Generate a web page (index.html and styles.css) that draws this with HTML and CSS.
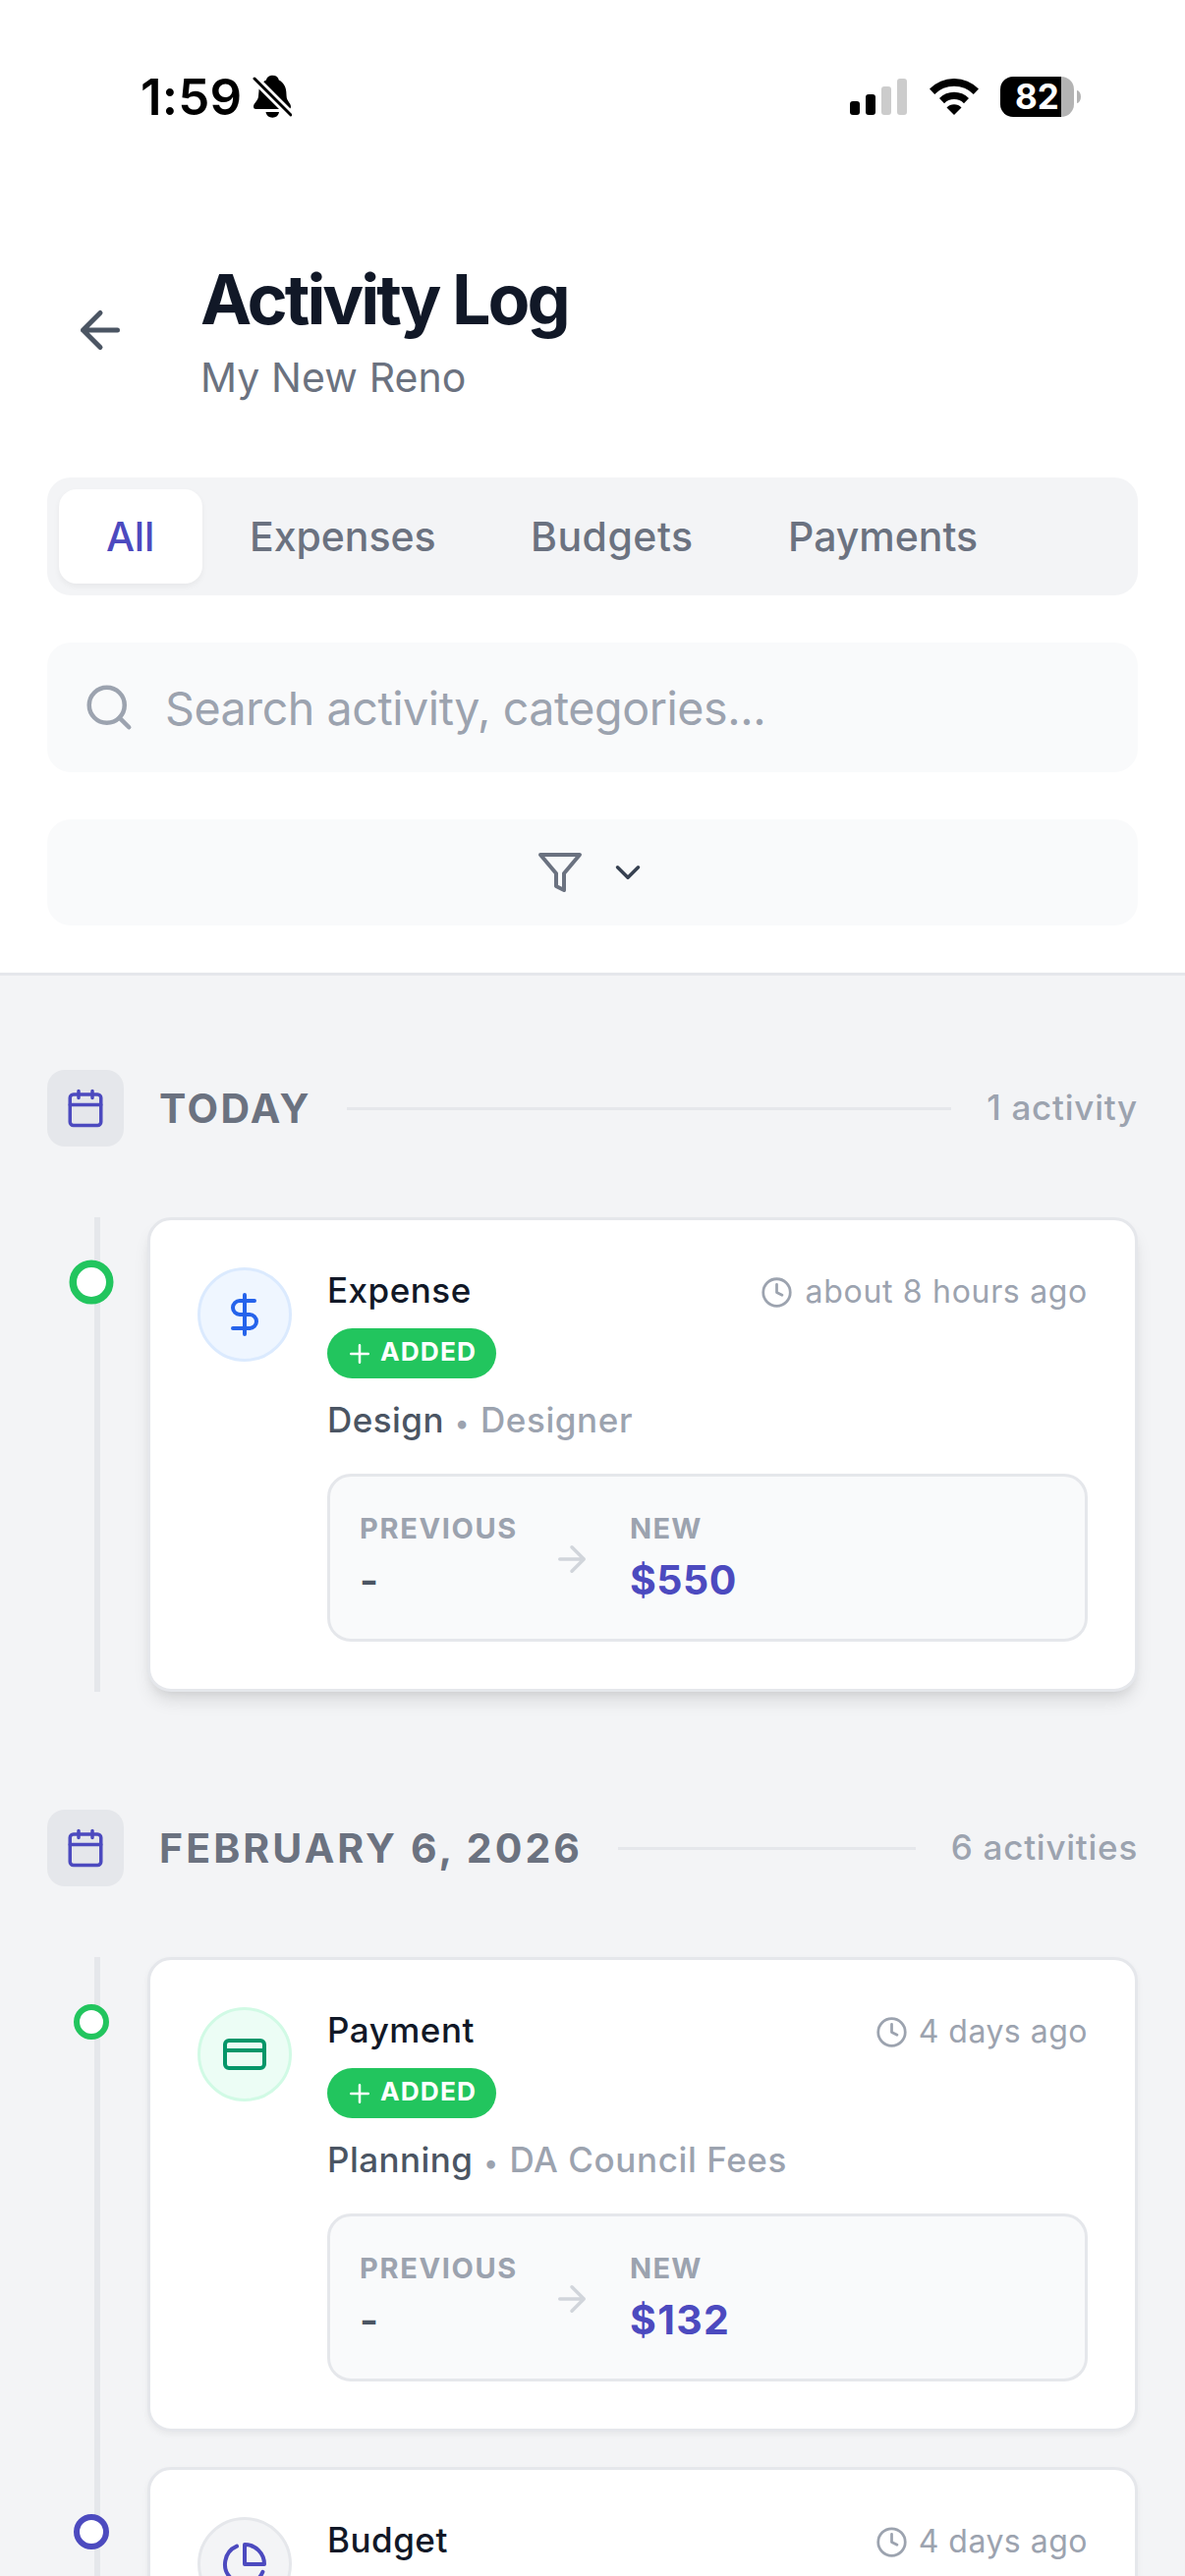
FILE: index.html
```
<!DOCTYPE html>
<html lang="en">
<head>
<meta charset="utf-8">
<title>Activity Log</title>
<link rel="stylesheet" href="styles.css">
</head>
<body>
<svg class="sprite" aria-hidden="true">
  <symbol id="i-calendar" viewBox="0 0 24 24"><path d="M8 2v4M16 2v4M3 10h18"/><rect x="3" y="4" width="18" height="18" rx="2"/></symbol>
  <symbol id="i-clock" viewBox="0 0 24 24"><circle cx="12" cy="12" r="10"/><path d="M12 6v6l4 2"/></symbol>
  <symbol id="i-plus" viewBox="0 0 24 24"><path d="M5 12h14M12 5v14"/></symbol>
  <symbol id="i-right" viewBox="0 0 24 24"><path d="M5 12h14M12 5l7 7-7 7"/></symbol>
</svg>

<div class="screen">
  <div class="status">
    <div class="status-left">
      <span class="clock">1:59</span>
      <svg class="bell" width="40" height="44" viewBox="0 0 40 44">
        <path d="M20.5 .8C17 .8 14.500 2.800 14 5.500 9.500 7.500 6.600 12 6.400 17.500L6 22C5.600 27 1 29 1 32.500Q1 35 3.500 35H36.500Q39 35 39 32.500C39 29 34.800 27 34.600 22L34.300 17.500C34 12 31 7.500 26.800 5.500 26.300 2.800 24 .8 20.500 .8Z"/>
        <path d="M13.500 38H27C26.500 41.500 24 43.700 20.300 43.700S14 41.500 13.500 38Z"/>
        <path class="bell-gap" d="M0 2L40 42"/>
        <path class="bell-slash" d="M2 4L39 41"/>
      </svg>
    </div>
    <div class="status-right">
      <div class="signal"><i class="b1"></i><i class="b2"></i><i class="b3"></i><i class="b4"></i></div>
      <svg width="50" height="37" viewBox="0 0 50 37">
        <path d="M0 10.500A35 35 0 0 1 50 10.500L44.800 16A27.800 27.800 0 0 0 5.200 16Z"/>
        <path d="M10 20A21 21 0 0 1 40 20L35 25.300A14 14 0 0 0 15 25.300Z"/>
        <path d="M17.500 29.500A10.500 10.500 0 0 1 32.500 29.500L25 37Z"/>
      </svg>
      <div class="battery"><div class="cell">82</div><i class="nub"></i></div>
    </div>
  </div>

  <header class="header">
    <div class="heading">
      <button class="back" aria-label="Back"><svg class="ic" width="60" height="60" viewBox="0 0 24 24"><path d="M12 19l-7-7 7-7M19 12H5"/></svg></button>
      <div>
        <h1>Activity Log</h1>
        <p class="project">My New Reno</p>
      </div>
    </div>
    <nav class="tabs">
      <a class="tab tab-all active">All</a>
      <a class="tab tab-expenses">Expenses</a>
      <a class="tab tab-budgets">Budgets</a>
      <a class="tab tab-payments">Payments</a>
    </nav>
    <div class="search">
      <svg class="ic" width="54" height="54" viewBox="0 0 24 24"><circle cx="11" cy="11" r="8"/><path d="M21 21l-4.300-4.300"/></svg>
      <span>Search activity, categories...</span>
    </div>
    <div class="filter">
      <svg class="ic funnel" width="48" height="48" viewBox="0 0 24 24"><path d="M22 3H2l8 9.460V19l4 2v-8.540L22 3z"/></svg>
      <svg class="ic chevron" width="42" height="42" viewBox="0 0 24 24"><path d="M6 9l6 6 6-6"/></svg>
    </div>
  </header>

  <main class="feed">
    <section class="group">
      <div class="day">
        <span class="day-icon"><svg class="ic" width="42" height="42"><use href="#i-calendar"/></svg></span>
        <h2 class="today">TODAY</h2>
        <i class="rule"></i>
        <span class="count">1 activity</span>
      </div>
      <div class="timeline">
        <article class="card latest">
          <i class="dot added"></i>
          <div class="avatar expense"><svg class="ic" width="48" height="48" viewBox="0 0 24 24"><path d="M12 2v20M17 5H9.500a3.500 3.500 0 0 0 0 7h5a3.500 3.500 0 0 1 0 7H6"/></svg></div>
          <div class="body">
            <div class="top"><h3>Expense</h3><span class="time hours"><svg class="ic" width="33" height="33"><use href="#i-clock"/></svg><span>about 8 hours ago</span></span></div>
            <div class="badge"><svg class="ic" width="30" height="30"><use href="#i-plus"/></svg><span>ADDED</span></div>
            <div class="item"><b>Design</b><i>•</i><span>Designer</span></div>
            <div class="change">
              <div class="from"><small>PREVIOUS</small><strong>-</strong></div>
              <svg class="ic arrow" width="42" height="42"><use href="#i-right"/></svg>
              <div class="to"><small>NEW</small><strong>$550</strong></div>
            </div>
          </div>
        </article>
      </div>
    </section>

    <section class="group">
      <div class="day">
        <span class="day-icon"><svg class="ic" width="42" height="42"><use href="#i-calendar"/></svg></span>
        <h2>FEBRUARY 6, 2026</h2>
        <i class="rule"></i>
        <span class="count">6 activities</span>
      </div>
      <div class="timeline">
        <article class="card">
          <i class="dot added"></i>
          <div class="avatar payment"><svg class="ic" width="48" height="48" viewBox="0 0 24 24"><rect x="2" y="5" width="20" height="14" rx="2"/><path d="M2 10h20"/></svg></div>
          <div class="body">
            <div class="top"><h3>Payment</h3><span class="time"><svg class="ic" width="33" height="33"><use href="#i-clock"/></svg><span>4 days ago</span></span></div>
            <div class="badge"><svg class="ic" width="30" height="30"><use href="#i-plus"/></svg><span>ADDED</span></div>
            <div class="item"><b>Planning</b><i>•</i><span>DA Council Fees</span></div>
            <div class="change">
              <div class="from"><small>PREVIOUS</small><strong>-</strong></div>
              <svg class="ic arrow" width="42" height="42"><use href="#i-right"/></svg>
              <div class="to"><small>NEW</small><strong class="wide">$132</strong></div>
            </div>
          </div>
        </article>
        <article class="card">
          <i class="dot changed"></i>
          <div class="avatar budget"><svg class="ic" width="48" height="48" viewBox="0 0 24 24"><path d="M21.210 15.890A10 10 0 1 1 8 2.830"/><path d="M22 12A10 10 0 0 0 12 2v10z"/></svg></div>
          <div class="body">
            <div class="top"><h3>Budget</h3><span class="time"><svg class="ic" width="33" height="33"><use href="#i-clock"/></svg><span>4 days ago</span></span></div>
          </div>
        </article>
      </div>
    </section>
  </main>
</div>
</body>
</html>
```
FILE: styles.css
```
:root {
  --indigo: #4c4abf;
  --gray-50: #f9fafb;
  --gray-100: #f3f4f6;
  --gray-200: #e5e7eb;
  --gray-300: #d1d5db;
  --gray-400: #9ca3af;
  --gray-500: #6b7280;
  --gray-600: #4b5563;
  --ink: #111827;
  --green: #22c55e;
}
* { box-sizing: border-box; margin: 0; padding: 0; }
body {
  background: #fff;
  color: var(--ink);
  font-family: Inter, "Liberation Sans", sans-serif;
  font-weight: 400;
  white-space: nowrap;
}
i { font-style: normal; }
svg { display: block; flex: none; }
.sprite { position: absolute; width: 0; height: 0; }
.ic {
  fill: none;
  stroke: currentColor;
  stroke-width: 2;
  stroke-linecap: round;
  stroke-linejoin: round;
}
.screen {
  width: 1206px;
  height: 2622px;
  display: flex;
  flex-direction: column;
  overflow: hidden;
}

/* status bar */
.status {
  height: 196px;
  flex: none;
  display: flex;
  align-items: center;
  justify-content: space-between;
  padding: 0 106px 0 143px;
  color: #000;
}
.status-left, .status-right, .battery { display: flex; align-items: center; }
.status-left { gap: 11px; }
.status-right { gap: 22.5px; }
.clock { font-size: 51px; font-weight: 600; letter-spacing: .2px; }
.bell-gap, .bell-slash { fill: none; stroke-linecap: round; }
.bell-gap { stroke: #fff; stroke-width: 8.500px; }
.bell-slash { stroke: #000; stroke-width: 3px; }
.signal { display: flex; align-items: flex-end; gap: 6px; height: 37px; }
.signal i { width: 10px; border-radius: 3px; background: #000; }
.signal .b1 { height: 14px; }
.signal .b2 { height: 21px; }
.signal .b3 { height: 29px; background: #ccc; }
.signal .b4 { height: 37px; background: #ccc; }
.battery { gap: 3px; }
.cell {
  width: 75px;
  height: 41px;
  padding-left: 15px;
  border-radius: 13px;
  background: linear-gradient(90deg, #000 62px, #b3b3b3 62px);
  color: #fff;
  font-size: 35px;
  font-weight: 700;
  line-height: 40px;
}
.nub { width: 4px; height: 13px; border-radius: 0 4px 4px 0 / 0 6.500px 6.500px 0; background: #b3b3b3; }

/* page header */
.header {
  flex: none;
  padding: 68px 48px 48px;
  border-bottom: 3px solid var(--gray-200);
}
.heading { display: flex; align-items: flex-start; gap: 48px; height: 150px; }
.back {
  width: 108px;
  height: 108px;
  margin-top: 18px;
  padding: 24px;
  border: 0;
  background: none;
  color: var(--gray-600);
}
h1 { font-size: 70px; font-weight: 700; line-height: 81px; letter-spacing: -3.030px; }
.project { margin-top: 9px; font-size: 41px; line-height: 60px; letter-spacing: .1px; color: var(--gray-500); }
.tabs {
  display: flex;
  height: 120px;
  margin-top: 72px;
  padding: 12px;
  border-radius: 24px;
  background: var(--gray-100);
}
.tab {
  padding: 0 48px;
  border-radius: 18px;
  font-size: 41px;
  font-weight: 500;
  line-height: 96px;
  color: var(--gray-500);
}
.tab-all { width: 146px; letter-spacing: -.2px; }
.tab-expenses { width: 286px; letter-spacing: -.05px; }
.tab-budgets { width: 262px; letter-spacing: .5px; }
.tab-payments { letter-spacing: 0; }
.tab.active { background: #fff; color: var(--indigo); box-shadow: 0 3px 6px rgba(0, 0, 0, .05); }
.search, .filter { display: flex; align-items: center; margin-top: 48px; border-radius: 24px; background: var(--gray-50); }
.search {
  height: 132px;
  gap: 30px;
  padding: 0 36px;
  color: var(--gray-400);
  font-size: 46.600px;
  letter-spacing: -.45px;
}
.search span { padding-top: 1px; }
.filter { height: 108px; justify-content: center; gap: 24px; }
.funnel { color: var(--gray-500); }
.chevron { color: #374151; }

/* feed */
.feed { flex: 1; padding: 96px 48px 0; background: var(--gray-100); }
.group { margin-bottom: 120px; }
.day { display: flex; align-items: center; gap: 36px; height: 78px; margin-bottom: 72px; }
.day-icon { padding: 18px; border-radius: 18px; background: var(--gray-200); color: var(--indigo); }
h2 { font-size: 41px; font-weight: 700; letter-spacing: 3.080px; color: var(--gray-500); }
h2.today { letter-spacing: 2.400px; }
.rule { flex: 1; height: 3px; background: var(--gray-200); }
.count { margin-bottom: 2px; font-size: 35px; font-weight: 450; letter-spacing: .750px; color: var(--gray-400); }

.timeline { position: relative; display: flex; flex-direction: column; gap: 36px; padding-left: 102px; }
.timeline::before {
  content: "";
  position: absolute;
  left: 48px;
  top: 0;
  bottom: 0;
  width: 6px;
  background: var(--gray-200);
}
.card {
  position: relative;
  display: flex;
  gap: 36px;
  height: 483px;
  padding: 48px;
  border: 3px solid var(--gray-200);
  border-radius: 24px;
  background: #fff;
  box-shadow: 0 3px 6px rgba(0, 0, 0, .05);
}
.card.latest { box-shadow: 0 12px 18px -3px rgba(0, 0, 0, .1), 0 6px 12px -6px rgba(0, 0, 0, .1); }
.dot {
  position: absolute;
  left: -60px;
  top: 63px;
  width: 36px;
  height: 36px;
  margin: -18px;
  border: 6px solid var(--green);
  border-radius: 50%;
  background: #fff;
}
.latest .dot { transform: scale(1.250); }
.dot.changed { border-color: var(--indigo); }
.avatar {
  flex: none;
  width: 96px;
  height: 96px;
  padding: 21px;
  border: 3px solid;
  border-radius: 50%;
}
.expense { background: #eff6ff; border-color: #dbeafe; }
.expense svg { color: #2563eb; }
.payment { background: #ecfdf5; border-color: #d1fae5; }
.payment svg { color: #059669; }
.budget { background: var(--gray-100); border-color: var(--gray-200); }
.budget svg { color: var(--indigo); }
.body { flex: 1; }
.top { display: flex; justify-content: space-between; height: 47px; line-height: 47px; }
h3 { font-size: 35px; font-weight: 500; letter-spacing: .500px; }
.time { display: flex; align-items: center; gap: 11px; margin-top: 2px; font-size: 32px; letter-spacing: .490px; color: var(--gray-400); }
.time.hours { gap: 13px; letter-spacing: .690px; }
.time svg { margin-top: 1px; }
.badge {
  display: flex;
  align-items: center;
  gap: 6px;
  width: 172px;
  height: 51px;
  margin-top: 15px;
  padding: 0 18px;
  border-radius: 26px;
  background: var(--green);
  color: #fff;
  font-size: 26.300px;
  font-weight: 700;
  letter-spacing: 1.100px;
}
.badge span { margin-bottom: 4px; }
.item { display: flex; align-items: baseline; height: 49px; margin-top: 18px; font-size: 35px; line-height: 49px; letter-spacing: .850px; color: var(--gray-400); }
.item b { font-weight: 500; letter-spacing: .450px; color: var(--gray-600); }
.item span { font-weight: 450; letter-spacing: .600px; }
.item i { width: 37px; font-size: 27px; text-align: center; }
.change {
  display: flex;
  align-items: center;
  gap: 36px;
  height: 171px;
  margin-top: 30px;
  padding: 0 30px;
  border: 3px solid var(--gray-200);
  border-radius: 24px;
  background: var(--gray-50);
}
.from { width: 159px; }
.arrow { margin-top: 3px; color: var(--gray-300); }
.to { padding-left: 2px; }
small { display: block; font-size: 29px; font-weight: 650; line-height: 45px; letter-spacing: 1.650px; color: var(--gray-400); }
.to small { letter-spacing: 1.300px; }
strong { display: block; font-size: 41px; font-weight: 600; line-height: 60px; color: var(--gray-600); }
.to strong { font-weight: 700; letter-spacing: .500px; color: var(--indigo); }
.to .wide { letter-spacing: 1.340px; }
```
